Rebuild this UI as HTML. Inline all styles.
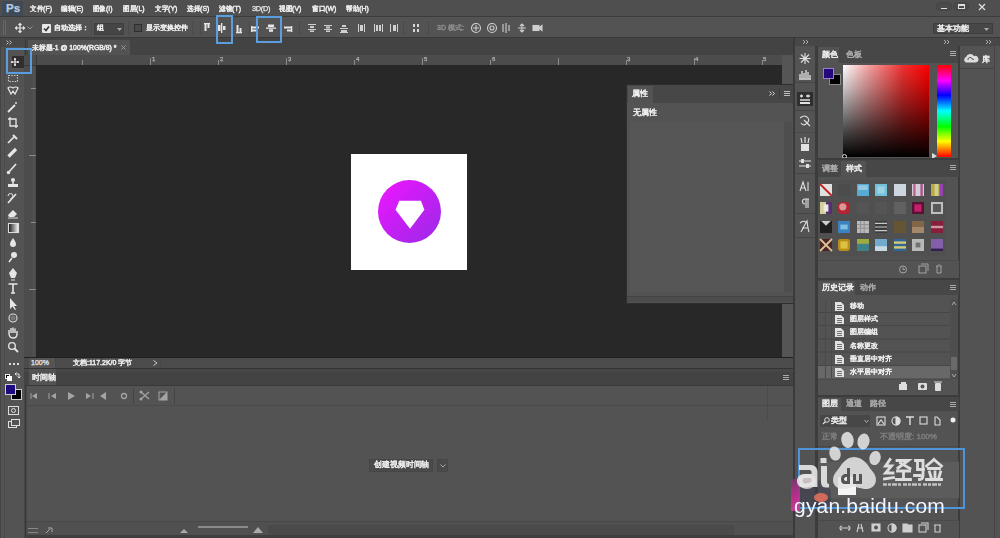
<!DOCTYPE html>
<html><head><meta charset="utf-8">
<style>
*{margin:0;padding:0;box-sizing:border-box}
html,body{width:1000px;height:538px;overflow:hidden;background:#535353;font-family:"Liberation Sans",sans-serif;color:#d0d0d0;font-size:8px}
#w{position:absolute;left:0;top:0;width:1000px;height:538px;overflow:hidden;filter:blur(0.5px)}
.a{position:absolute}
.t{position:absolute;white-space:nowrap;font-size:8px;line-height:10px;color:#ececec;-webkit-text-stroke:0.25px currentColor}
.d{color:#a9a9a9}
svg.i{position:absolute;overflow:visible}
</style></head><body><div id="w">
<!-- ===== MENU BAR ===== -->
<div class="a" style="left:0;top:0;width:1000px;height:17px;background:#4f4f4f"></div>
<div class="a" style="left:0;top:16px;width:1000px;height:1px;background:#3c3c3c"></div>
<div class="a" style="left:2px;top:1px;width:21px;height:15px;background:#404a55"></div><div class="t" style="left:6px;top:2px;font-size:11.5px;line-height:13px;color:#b4cce4;font-weight:bold;letter-spacing:0px">Ps</div>
<svg class="i" style="left:30.00px;top:4.00px" width="25" height="14"><text x="0" y="7.00" font-size="7.40" fill="rgb(236, 236, 236)" stroke="rgb(236, 236, 236)" stroke-width="0.5" textLength="21.94" lengthAdjust="spacingAndGlyphs">文件(F)</text></svg>
<svg class="i" style="left:61.00px;top:4.00px" width="26" height="14"><text x="0" y="7.00" font-size="7.40" fill="rgb(236, 236, 236)" stroke="rgb(236, 236, 236)" stroke-width="0.5" textLength="22.36" lengthAdjust="spacingAndGlyphs">编辑(E)</text></svg>
<svg class="i" style="left:93.00px;top:4.00px" width="23" height="14"><text x="0" y="7.00" font-size="7.40" fill="rgb(236, 236, 236)" stroke="rgb(236, 236, 236)" stroke-width="0.5" textLength="19.48" lengthAdjust="spacingAndGlyphs">图像(I)</text></svg>
<svg class="i" style="left:123.00px;top:4.00px" width="25" height="14"><text x="0" y="7.00" font-size="7.40" fill="rgb(236, 236, 236)" stroke="rgb(236, 236, 236)" stroke-width="0.5" textLength="21.55" lengthAdjust="spacingAndGlyphs">图层(L)</text></svg>
<svg class="i" style="left:155.00px;top:4.00px" width="26" height="14"><text x="0" y="7.00" font-size="7.40" fill="rgb(236, 236, 236)" stroke="rgb(236, 236, 236)" stroke-width="0.5" textLength="22.36" lengthAdjust="spacingAndGlyphs">文字(Y)</text></svg>
<svg class="i" style="left:187.00px;top:4.00px" width="26" height="14"><text x="0" y="7.00" font-size="7.40" fill="rgb(236, 236, 236)" stroke="rgb(236, 236, 236)" stroke-width="0.5" textLength="22.36" lengthAdjust="spacingAndGlyphs">选择(S)</text></svg>
<svg class="i" style="left:219.00px;top:4.00px" width="25" height="14"><text x="0" y="7.00" font-size="7.40" fill="rgb(236, 236, 236)" stroke="rgb(236, 236, 236)" stroke-width="0.5" textLength="21.94" lengthAdjust="spacingAndGlyphs">滤镜(T)</text></svg>
<div class="t" style="left:252px;top:4px;font-size:7.4px;letter-spacing:-0.3px">3D(D)</div>
<svg class="i" style="left:279.00px;top:4.00px" width="26" height="14"><text x="0" y="7.00" font-size="7.40" fill="rgb(236, 236, 236)" stroke="rgb(236, 236, 236)" stroke-width="0.5" textLength="22.36" lengthAdjust="spacingAndGlyphs">视图(V)</text></svg>
<svg class="i" style="left:312.00px;top:4.00px" width="28" height="14"><text x="0" y="7.00" font-size="7.40" fill="rgb(236, 236, 236)" stroke="rgb(236, 236, 236)" stroke-width="0.5" textLength="24.41" lengthAdjust="spacingAndGlyphs">窗口(W)</text></svg>
<svg class="i" style="left:346.00px;top:4.00px" width="26" height="14"><text x="0" y="7.00" font-size="7.40" fill="rgb(236, 236, 236)" stroke="rgb(236, 236, 236)" stroke-width="0.5" textLength="22.77" lengthAdjust="spacingAndGlyphs">帮助(H)</text></svg>
<!-- window controls -->
<div class="a" style="left:936px;top:2px;width:16px;height:9px;border:1px solid #454545;border-radius:4px;background:#4a4a4a"></div>
<div class="a" style="left:941px;top:8px;width:6px;height:1px;background:#ddd"></div>
<div class="a" style="left:953px;top:2px;width:16px;height:9px;border:1px solid #454545;border-radius:4px;background:#4a4a4a"></div>
<div class="a" style="left:958px;top:4px;width:7px;height:5px;border:1px solid #ddd;border-top-width:2px"></div>
<svg class="i" style="left:978px;top:3px" width="8" height="8"><path d="M1 1L7 7M7 1L1 7" stroke="#ddd" stroke-width="1.3"/></svg>
<!-- ===== OPTIONS BAR ===== -->
<div class="a" style="left:0;top:17px;width:1000px;height:21px;background:#535353;border-bottom:1px solid #3a3a3a"></div>
<div class="a" style="left:3px;top:20px;width:3px;height:15px;border-left:1px solid #666;border-right:1px solid #666"></div>
<svg class="i" style="left:15px;top:23px" width="10" height="10"><path d="M5 0.5V9.5M0.5 5H9.5M3.5 2L5 0.5L6.5 2M3.5 8L5 9.5L6.5 8M2 3.5L0.5 5L2 6.5M8 3.5L9.5 5L8 6.5" stroke="#e6e6e6" stroke-width="1.2" fill="none"/></svg>
<svg class="i" style="left:27px;top:26px" width="6" height="4"><path d="M0.5 0.5L3 3L5.5 0.5" stroke="#999" fill="none"/></svg>
<div class="a" style="left:42px;top:24px;width:9px;height:9px;background:#e8e8e8;border-radius:1px"></div>
<svg class="i" style="left:43px;top:25px" width="7" height="7"><path d="M1 3.5L3 5.5L6 1.5" stroke="#333" stroke-width="1.5" fill="none"/></svg>
<svg class="i" style="left:54.00px;top:23.00px" width="39" height="14"><text x="0" y="7.00" font-size="7.00" fill="rgb(236, 236, 236)" stroke="rgb(236, 236, 236)" stroke-width="0.5" textLength="35.00" lengthAdjust="spacingAndGlyphs">自动选择：</text></svg>
<div class="a" style="left:91px;top:21px;width:1px;height:14px;background:#4a4a4a"></div>
<div class="a" style="left:94px;top:23px;width:30px;height:12px;background:#454545;border:1px solid #3e3e3e"></div>
<svg class="i" style="left:97.00px;top:23.00px" width="11" height="14"><text x="0" y="7.00" font-size="7.00" fill="rgb(236, 236, 236)" stroke="rgb(236, 236, 236)" stroke-width="0.5" textLength="7.00" lengthAdjust="spacingAndGlyphs">组</text></svg>
<svg class="i" style="left:117px;top:28px" width="5" height="3"><path d="M0 0L2.5 3L5 0Z" fill="#aaa"/></svg>
<div class="a" style="left:128px;top:21px;width:1px;height:14px;background:#4a4a4a"></div>
<div class="a" style="left:134px;top:24px;width:8px;height:8px;border:1px solid #2e2e2e;background:#4a4a4a"></div>
<svg class="i" style="left:146.00px;top:23.00px" width="46" height="14"><text x="0" y="7.00" font-size="6.90" fill="rgb(236, 236, 236)" stroke="rgb(236, 236, 236)" stroke-width="0.5" textLength="42.00" lengthAdjust="spacingAndGlyphs">显示变换控件</text></svg>
<div class="a" style="left:192px;top:21px;width:1px;height:14px;background:#4a4a4a"></div>
<!-- align icons -->
<svg class="i" style="left:200px;top:22px" width="360" height="12" fill="#e6e6e6">
 <g><rect x="4" y="1" width="6" height="1.3"/><rect x="4.5" y="2" width="2" height="7"/><rect x="7.5" y="2" width="2" height="4"/></g>
 <g transform="translate(16,0)"><rect x="5" y="1" width="1.3" height="10"/><rect x="2" y="3" width="2.5" height="6"/><rect x="7" y="4" width="2.5" height="4"/></g>
 <g transform="translate(32,0)"><rect x="4" y="10" width="6" height="1.3"/><rect x="4.5" y="3" width="2" height="7"/><rect x="7.5" y="6" width="2" height="4"/></g>
 <g transform="translate(49,0)"><rect x="2" y="4" width="1.3" height="6"/><rect x="3" y="4.5" width="7" height="2"/><rect x="3" y="7.5" width="4" height="2"/></g>
 <g transform="translate(65,0)"><rect x="1" y="5.5" width="10" height="1.3"/><rect x="3" y="2.5" width="6" height="2.5"/><rect x="4" y="7.3" width="4" height="2.5"/></g>
 <g transform="translate(81,0)"><rect x="10" y="4" width="1.3" height="6"/><rect x="3" y="4.5" width="7" height="2"/><rect x="6" y="7.5" width="4" height="2"/></g>
 <g transform="translate(106,0)" opacity="0.85"><rect x="2" y="2" width="8" height="1"/><rect x="4" y="4" width="4" height="2"/><rect x="2" y="7" width="8" height="1"/><rect x="4" y="8.5" width="4" height="1.5"/></g>
 <g transform="translate(122,0)" opacity="0.85"><rect x="2" y="3" width="8" height="1"/><rect x="4" y="4.5" width="4" height="2"/><rect x="2" y="7" width="8" height="1"/><rect x="4" y="8.5" width="4" height="1.5"/></g>
 <g transform="translate(138,0)" opacity="0.85"><rect x="4" y="3" width="4" height="2"/><rect x="2" y="6" width="8" height="1"/><rect x="3" y="8" width="6" height="2"/><rect x="2" y="10" width="8" height="1"/></g>
 <g transform="translate(156,0)" opacity="0.85"><rect x="2" y="2" width="1" height="8"/><rect x="4" y="3" width="3" height="6"/><rect x="8" y="2" width="1" height="8"/></g>
 <g transform="translate(172,0)" opacity="0.85"><rect x="2" y="2" width="1" height="8"/><rect x="4" y="3" width="2" height="6"/><rect x="7" y="3" width="2" height="6"/><rect x="10" y="2" width="1" height="8"/></g>
 <g transform="translate(188,0)" opacity="0.85"><rect x="2" y="2" width="1" height="8"/><rect x="5" y="3" width="3" height="6"/><rect x="9" y="2" width="1" height="8"/></g>
 <g transform="translate(210,0)" opacity="0.9"><rect x="3" y="2" width="2" height="3"/><rect x="7" y="2" width="2" height="3"/><rect x="3" y="7" width="2" height="3"/><rect x="7" y="7" width="2" height="3"/></g>
</svg>
<div class="a" style="left:200px;top:21px;width:1px;height:14px;background:#4a4a4a"></div>
<div class="a" style="left:249px;top:21px;width:1px;height:14px;background:#4a4a4a"></div>
<div class="a" style="left:299px;top:21px;width:1px;height:14px;background:#4a4a4a"></div>
<div class="a" style="left:403px;top:21px;width:1px;height:14px;background:#4a4a4a"></div>
<div class="a" style="left:428px;top:21px;width:1px;height:14px;background:#4a4a4a"></div>
<svg class="i" style="left:437.00px;top:23.00px" width="30" height="14"><text x="0" y="7.00" font-size="7.00" fill="rgb(138, 138, 138)" stroke="rgb(138, 138, 138)" stroke-width="0.5" textLength="26.84" lengthAdjust="spacingAndGlyphs">3D 模式:</text></svg>
<svg class="i" style="left:470px;top:22px" width="75" height="12" fill="none" stroke="#cfcfcf" stroke-width="1.1">
 <circle cx="6" cy="6" r="4.5"/><path d="M3 6H9M6 3V9"/>
 <circle cx="22" cy="6" r="4.5"/><circle cx="22" cy="6" r="2"/>
 <path d="M33 2V10M36 1V11M39 3V9"/>
 <path d="M48 6H56M52 2V10M50 4L52 2L54 4M50 8L52 10L54 8"/>
 <rect x="63" y="3.5" width="6" height="5" fill="#cfcfcf"/><path d="M69 6L72 3.5V8.5Z" fill="#cfcfcf"/>
</svg>
<!-- blue highlight boxes on options -->
<div class="a" style="left:216px;top:15px;width:17px;height:29px;border:2px solid #5a9ee0;z-index:6"></div>
<div class="a" style="left:256px;top:16px;width:26px;height:27px;border:2px solid #5a9ee0;z-index:6"></div>
<!-- workspace dropdown -->
<div class="a" style="left:933px;top:23px;width:60px;height:11px;background:#474747;border:1px solid #3e3e3e"></div>
<svg class="i" style="left:937.00px;top:24.00px" width="36" height="14"><text x="0" y="7.00" font-size="8.00" fill="rgb(236, 236, 236)" stroke="rgb(236, 236, 236)" stroke-width="0.5" textLength="32.00" lengthAdjust="spacingAndGlyphs">基本功能</text></svg>
<svg class="i" style="left:984px;top:28px" width="5" height="3"><path d="M0 0L2.5 3L5 0Z" fill="#aaa"/></svg>

<!-- ===== TOOLS COLUMN ===== -->
<div class="a" style="left:0;top:38px;width:25px;height:500px;background:#535353"></div>
<div class="a" style="left:0;top:38px;width:25px;height:9px;background:#484848"></div>
<svg class="i" style="left:6px;top:40px" width="6" height="5"><path d="M0.5 0.5L2.5 2.5L0.5 4.5M3.5 0.5L5.5 2.5L3.5 4.5" stroke="#bbb" fill="none"/></svg>
<div class="a" style="left:0;top:38px;width:1px;height:500px;background:#444"></div><div class="a" style="left:4px;top:47px;width:1px;height:491px;background:#4a4a4a"></div><div class="a" style="left:24px;top:38px;width:3px;height:500px;background:#474747"></div><div class="a" style="left:25px;top:38px;width:1px;height:500px;background:#383838"></div>
<div class="a" style="left:6px;top:48px;width:26px;height:26px;border:2px solid #5a9ee0;z-index:5"></div>
<div class="a" style="left:12px;top:56px;width:12px;height:12px;background:#332e2e"></div>
<svg class="i" style="left:0;top:0" width="26" height="440" fill="none" stroke="#e6e6e6" stroke-width="1.1">
 <!-- move -->
 <path d="M15 59V65M12 62H18" stroke-width="1.2"/><circle cx="15" cy="59" r="1.1" fill="#eee" stroke="none"/><circle cx="15" cy="65" r="1.1" fill="#eee" stroke="none"/><circle cx="12" cy="62" r="1.1" fill="#eee" stroke="none"/><circle cx="18" cy="62" r="1.1" fill="#eee" stroke="none"/>
 <!-- marquee -->
 <rect x="8.5" y="75.5" width="9" height="6" stroke-dasharray="1.5 1.2" stroke="#ccc"/>
 <!-- lasso -->
 <path d="M8 88Q10 86 13 88Q16 86 18 88L15 94L13 91L11 94Z" stroke-width="1.2"/>
 <!-- wand -->
 <path d="M8 112L15 105" stroke-width="1.8"/><path d="M16 102V104M17 103H15" stroke-width="0.9"/>
 <!-- crop -->
 <path d="M10 117V126H18M8 119H16V128" stroke-width="1.3"/>
 <!-- eyedropper -->
 <path d="M8 143L14 137" stroke-width="1.7"/><path d="M13 135L17 139" stroke-width="2"/>
 <!-- healing -->
 <path d="M8.5 156.5L16 149" stroke-width="3.2"/>
 <!-- brush -->
 <path d="M8 173L16 164" stroke-width="1.7"/><circle cx="8.5" cy="172.5" r="1.2" fill="#e6e6e6"/>
 <!-- stamp -->
 <circle cx="13" cy="180" r="2" fill="#e6e6e6" stroke="none"/><path d="M13 182V184" stroke-width="1.5"/><rect x="8" y="184" width="10" height="3" fill="#e6e6e6" stroke="none"/>
 <!-- history brush -->
 <path d="M8 203L16 194" stroke-width="1.7"/><path d="M8 196A2.5 2.5 0 1 1 10.5 198.5" stroke-width="1"/>
 <!-- eraser -->
 <path d="M8 215L13 210L17 214L14 217H9Z" fill="#e6e6e6" stroke="none"/><path d="M8 218H18" stroke-width="0.9"/>
 <!-- gradient -->
 <rect x="8.5" y="223.5" width="10" height="9" stroke="#ddd"/><rect x="9" y="224" width="9" height="8" fill="url(#gr)" stroke="none"/>
 <!-- blur drop -->
 <path d="M13 238Q16 242 16 244A3 3 0 0 1 10 244Q10 242 13 238Z" fill="#e6e6e6" stroke="none"/>
 <!-- dodge -->
 <circle cx="14" cy="255" r="3" fill="#e6e6e6" stroke="none"/><path d="M12 258L9 262" stroke-width="1.5"/>
 <!-- pen -->
 <path d="M13 268L17 273L15 278H11L9 273Z" fill="#e6e6e6" stroke="none"/><path d="M11 280H15" stroke-width="1"/>
 <!-- type -->
 <path d="M8.5 284H17.5M13 284V293M11 293H15" stroke-width="1.6"/>
 <!-- path select -->
 <path d="M10 298V309L12.5 306.5L15 310L16 309.5L14 306H17Z" fill="#e6e6e6" stroke="none"/>
 <!-- shape -->
 <circle cx="13" cy="318" r="4" stroke="#ddd"/><circle cx="13" cy="318" r="2.5" fill="#777" stroke="none"/>
 <!-- hand -->
 <path d="M9 333V330M11 333V328M13 333V327.5M15 333V328.5M17 334V331M9 333Q9 338 13 338Q17 338 17 334" stroke-width="1.4"/>
 <!-- zoom -->
 <circle cx="12" cy="346" r="3.3" stroke-width="1.3"/><path d="M14.5 348.5L18 352" stroke-width="1.8"/>
</svg>
<svg width="0" height="0" style="position:absolute"><defs><linearGradient id="gr"><stop offset="0" stop-color="#222"/><stop offset="1" stop-color="#eee"/></linearGradient></defs></svg>
<div class="a" style="left:9px;top:363px;width:2px;height:2px;background:#ddd;box-shadow:4px 0 #ddd,8px 0 #ddd"></div>
<div class="a" style="left:5px;top:374px;width:5px;height:5px;background:#000;border:1px solid #eee"></div>
<div class="a" style="left:7px;top:376px;width:5px;height:5px;background:#fff"></div>
<svg class="i" style="left:14px;top:372px" width="7" height="7"><path d="M1 2H5V6M3.5 4.5L5 6L6.5 4.5M2.5 0.5L1 2L2.5 3.5" stroke="#ddd" fill="none"/></svg>
<div class="a" style="left:11px;top:389px;width:11px;height:11px;background:#000;border:1px solid #cfcfcf"></div>
<div class="a" style="left:5px;top:384px;width:11px;height:11px;background:#1f0a80;border:1px solid #cfcfcf"></div>
<div class="a" style="left:8px;top:406px;width:11px;height:9px;border:1px solid #ddd"></div>
<div class="a" style="left:11px;top:408px;width:5px;height:5px;border:1px solid #ddd;border-radius:50%"></div>
<div class="a" style="left:8px;top:421px;width:9px;height:7px;border:1px solid #ddd"></div>
<div class="a" style="left:11px;top:419px;width:9px;height:7px;border:1px solid #ddd;background:#535353"></div>

<!-- ===== DOCUMENT AREA ===== -->
<div class="a" style="left:27px;top:38px;width:766px;height:17px;background:#434343"></div>
<div class="a" style="left:28px;top:40px;width:102px;height:15px;background:#535353;border-radius:2px 2px 0 0"></div>
<svg class="i" style="left:32.00px;top:43.00px" width="88" height="14"><text x="0" y="7.00" font-size="7.00" fill="rgb(236, 236, 236)" stroke="rgb(236, 236, 236)" stroke-width="0.5" textLength="84.38" lengthAdjust="spacingAndGlyphs">未标题-1 @ 100%(RGB/8) *</text></svg>
<svg class="i" style="left:121px;top:45px" width="5" height="5"><path d="M0.5 0.5L4.5 4.5M4.5 0.5L0.5 4.5" stroke="#999"/></svg>
<!-- rulers -->
<div class="a" style="left:27px;top:55px;width:755px;height:11px;background:#4c4c4c;border-bottom:1px solid #1e1e1e"></div>
<div class="a" style="left:24px;top:55px;width:13px;height:303px;background:#4c4c4c;border-right:1px solid #222"></div><div class="a" style="left:33px;top:66px;width:1px;height:292px;background:#555"></div>
<div class="a" style="left:24px;top:55px;width:13px;height:11px;background:#4c4c4c;border-right:1px solid #3a3a3a;border-bottom:1px solid #3a3a3a"></div>
<svg class="i" style="left:0;top:0" width="800" height="360" stroke="#8c8c8c" stroke-width="1">
 <path d="M82.5 60V65M150.5 58V65M218.5 60V65M286.5 58V65M354.5 60V65M422.5 58V65M490.5 60V65M558.5 58V65M626.5 60V65M694.5 58V65M762.5 60V65"/>
 <path d="M31 88.5H36M29 155.5H36M31 222.5H36M29 289.5H36"/>
</svg>
<div class="t" style="left:152px;top:56px;font-size:6px;line-height:7px;color:#b0b0b0">1</div>
<div class="t" style="left:220px;top:56px;font-size:6px;line-height:7px;color:#b0b0b0">2</div>
<div class="t" style="left:288px;top:56px;font-size:6px;line-height:7px;color:#b0b0b0">3</div>
<div class="t" style="left:356px;top:56px;font-size:6px;line-height:7px;color:#b0b0b0">4</div>
<div class="t" style="left:424px;top:56px;font-size:6px;line-height:7px;color:#b0b0b0">5</div>
<div class="t" style="left:492px;top:56px;font-size:6px;line-height:7px;color:#b0b0b0">6</div>
<div class="t" style="left:627px;top:56px;font-size:6px;line-height:7px;color:#b0b0b0">3</div>
<div class="t" style="left:695px;top:56px;font-size:6px;line-height:7px;color:#b0b0b0">4</div>
<div class="t" style="left:763px;top:56px;font-size:6px;line-height:7px;color:#b0b0b0">5</div>
<!-- canvas -->
<div class="a" style="left:36px;top:65px;width:746px;height:293px;background:#282828"></div>
<!-- right strip of doc window -->
<div class="a" style="left:782px;top:55px;width:11px;height:303px;background:#555"></div>
<!-- document image -->
<div class="a" style="left:351px;top:154px;width:116px;height:116px;background:#fff"></div>
<div class="a" style="left:378px;top:180px;width:63px;height:63px;border-radius:50%;background:linear-gradient(135deg,#f016ff 0%,#c81ef5 45%,#9a2ae6 100%)"></div>
<svg class="i" style="left:0;top:0" width="1000" height="538"><polygon points="399.3,200.8 420.9,200.8 424.4,209.8 410,228.7 395.5,209.8" fill="#fff"/></svg>
<!-- status bar -->
<div class="a" style="left:24px;top:357px;width:769px;height:1px;background:#202020"></div><div class="a" style="left:24px;top:358px;width:769px;height:10px;background:#4c4c4c"></div><div class="a" style="left:29px;top:358px;width:26px;height:10px;background:#555"></div>
<div class="a" style="left:55px;top:358px;width:1px;height:10px;background:#474747"></div>
<div class="t" style="left:31px;top:358px;font-size:7px">100%</div>
<svg class="i" style="left:73.00px;top:358.00px" width="63" height="14"><text x="0" y="7.00" font-size="7.00" fill="rgb(236, 236, 236)" stroke="rgb(236, 236, 236)" stroke-width="0.5" textLength="59.41" lengthAdjust="spacingAndGlyphs">文档:117.2K/0 字节</text></svg>
<svg class="i" style="left:153px;top:360px" width="5" height="6"><path d="M0.5 0.5L4 3L0.5 5.5" stroke="#ccc" fill="none"/></svg>
<div class="a" style="left:160px;top:358px;width:1px;height:10px;background:#474747"></div>
<!-- properties floating panel -->
<div class="a" style="left:626px;top:84px;width:168px;height:220px;background:#2e2e2e"></div>
<div class="a" style="left:627px;top:85px;width:166px;height:218px;background:#535353"></div>
<div class="a" style="left:627px;top:85px;width:166px;height:18px;background:#474747"></div>
<div class="a" style="left:628px;top:86px;width:25px;height:17px;background:#535353"></div>
<svg class="i" style="left:632.00px;top:89.00px" width="20" height="14"><text x="0" y="7.00" font-size="8.00" fill="rgb(236, 236, 236)" stroke="rgb(236, 236, 236)" stroke-width="0.5" textLength="16.00" lengthAdjust="spacingAndGlyphs">属性</text></svg>
<svg class="i" style="left:769px;top:91px" width="7" height="5"><path d="M0.5 0.5L2.5 2.5L0.5 4.5M3.5 0.5L5.5 2.5L3.5 4.5" stroke="#ddd" fill="none"/></svg>
<div class="a" style="left:779px;top:89px;width:1px;height:10px;background:#3a3a3a"></div>
<div class="a" style="left:784px;top:91px;width:6px;height:5px;border-top:1px solid #bbb;border-bottom:1px solid #bbb"></div>
<div class="a" style="left:784px;top:93px;width:6px;height:1px;background:#bbb"></div>
<svg class="i" style="left:633.00px;top:108.00px" width="28" height="14"><text x="0" y="7.00" font-size="8.00" fill="rgb(236, 236, 236)" stroke="rgb(236, 236, 236)" stroke-width="0.5" textLength="24.00" lengthAdjust="spacingAndGlyphs">无属性</text></svg>
<div class="a" style="left:630px;top:122px;width:154px;height:170px;background:#565656"></div>
<div class="a" style="left:784px;top:122px;width:8px;height:170px;background:#4e4e4e"></div>
<div class="a" style="left:627px;top:296px;width:166px;height:6px;background:#4c4c4c;border-top:1px solid #444"></div>
<!-- ===== TIMELINE ===== -->
<div class="a" style="left:24px;top:368px;width:769px;height:1px;background:#333"></div>
<div class="a" style="left:24px;top:369px;width:769px;height:17px;background:#434343;border-top:3px solid #474747;border-bottom:1px solid #383838"></div>
<div class="a" style="left:29px;top:369px;width:27px;height:16px;background:#535353"></div>
<svg class="i" style="left:32.00px;top:373.00px" width="28" height="14"><text x="0" y="7.00" font-size="8.00" fill="rgb(236, 236, 236)" stroke="rgb(236, 236, 236)" stroke-width="0.5" textLength="24.00" lengthAdjust="spacingAndGlyphs">时间轴</text></svg>
<div class="a" style="left:27px;top:386px;width:766px;height:152px;background:#535353"></div><div class="a" style="left:783px;top:375px;width:6px;height:5px;border-top:1px solid #aaa;border-bottom:1px solid #aaa"></div><div class="a" style="left:783px;top:377px;width:6px;height:1px;background:#aaa"></div>
<svg class="i" style="left:0;top:0" width="800" height="538" fill="#a4a4a4">
 <path d="M31 393V399" stroke="#a4a4a4"/><path d="M37 393L32 396L37 399Z"/>
 <path d="M49 393V399" stroke="#a4a4a4"/><path d="M56 393L51 396L56 399Z"/>
 <path d="M68 392L75 396L68 400Z"/>
 <path d="M93 393V399" stroke="#a4a4a4"/><path d="M86 393L91 396L86 399Z"/>
 <path d="M106 392L100 396L106 400Z"/>
 <circle cx="124" cy="396" r="2.5" fill="none" stroke="#a4a4a4" stroke-width="1.3"/>
 <path d="M133.5 388V404" stroke="#444"/>
 <path d="M141 392L149 399M141 399L149 392" stroke="#a4a4a4" stroke-width="1.2"/><circle cx="141" cy="392" r="1.5"/><circle cx="141" cy="399" r="1.5"/>
 <rect x="159" y="392" width="8" height="8" fill="none" stroke="#a4a4a4"/><path d="M159 400L167 392V400Z"/>
 <path d="M174.5 388V404" stroke="#444"/>
</svg>
<div class="a" style="left:27px;top:405px;width:766px;height:1px;background:#4a4a4a"></div><div class="a" style="left:767px;top:386px;width:1px;height:34px;background:#4b4b4b"></div>
<div class="a" style="left:369px;top:459px;width:64px;height:13px;background:#4a4a4a;border:1px solid #464646"></div>
<svg class="i" style="left:374.00px;top:460.00px" width="59" height="14"><text x="0" y="7.00" font-size="7.60" fill="rgb(236, 236, 236)" stroke="rgb(236, 236, 236)" stroke-width="0.5" textLength="55.31" lengthAdjust="spacingAndGlyphs">创建视频时间轴</text></svg>
<div class="a" style="left:437px;top:459px;width:11px;height:13px;background:#4a4a4a;border:1px solid #464646"></div>
<svg class="i" style="left:439.5px;top:464px" width="6" height="4"><path d="M0.5 0.5L3 3L5.5 0.5" stroke="#aaa" fill="none"/></svg>
<div class="a" style="left:27px;top:521px;width:766px;height:14px;background:#505050;border-top:1px solid #484848"></div>
<div class="a" style="left:28px;top:528px;width:10px;height:5px;border-top:1px solid #888;border-bottom:1px solid #888"></div>
<svg class="i" style="left:45px;top:526px" width="10" height="8"><path d="M1 7L5 3M3 2H7V6" stroke="#aaa" fill="none"/></svg>
<svg class="i" style="left:180px;top:528px" width="8" height="5"><path d="M0 5L4 1L8 5Z" fill="#aaa"/></svg>
<div class="a" style="left:198px;top:526px;width:50px;height:2px;background:#8a8a8a"></div>
<svg class="i" style="left:253px;top:526px" width="10" height="7"><path d="M0 7L5 1L10 7Z" fill="#aaa"/></svg>
<div class="a" style="left:268px;top:525px;width:466px;height:10px;background:#4a4a4a"></div>
<!-- doc bottom/right frame -->
<div class="a" style="left:793px;top:38px;width:2px;height:500px;background:#3a3a3a"></div>
<div class="a" style="left:27px;top:535px;width:766px;height:3px;background:#3e3e3e"></div>

<!-- ===== RIGHT DOCK ===== -->
<div class="a" style="left:795px;top:38px;width:205px;height:500px;background:#535353"></div>
<div class="a" style="left:795px;top:38px;width:205px;height:8px;background:#474747"></div>
<svg class="i" style="left:0;top:0" width="1000" height="50"><path d="M803 40L805 42L803 44M806 40L808 42L806 44M944 40L946 42L944 44M947 40L949 42L947 44M986 40L988 42L986 44M989 40L991 42L989 44" stroke="#bbb" fill="none" stroke-width="0.9"/></svg>
<!-- icon column -->
<div class="a" style="left:815px;top:46px;width:3px;height:492px;background:#3c3c3c"></div>
<div class="a" style="left:795px;top:82px;width:20px;height:1px;background:#454545"></div>
<div class="a" style="left:795px;top:110px;width:20px;height:1px;background:#454545"></div>
<div class="a" style="left:795px;top:173px;width:20px;height:1px;background:#454545"></div><div class="a" style="left:795px;top:132px;width:20px;height:1px;background:#4a4a4a"></div>
<div class="a" style="left:795px;top:213px;width:20px;height:1px;background:#454545"></div>
<div class="a" style="left:795px;top:237px;width:20px;height:1px;background:#454545"></div>
<div class="a" style="left:797px;top:92px;width:16px;height:14px;background:#2f2f2f"></div>
<svg class="i" style="left:0;top:0" width="1000" height="240" fill="none" stroke="#e0e0e0" stroke-width="1.1">
 <path d="M805 53V64M799.5 58.5H810.5M801 54.5L809 62.5M809 54.5L801 62.5"/>
 <path d="M799 79H811M800 78V74M802 78V71M804 78V73M806 78V70M808 78V72M810 78V75" stroke-width="1.3"/>
 <path d="M800 96H803M806 96H810M801.5 94.5V97.5M808 94.5V97.5M800 100H810" stroke-width="1.3"/><rect x="800" y="102" width="10" height="2" fill="#e0e0e0" stroke="none"/>
 <path d="M800 118Q805 114 808 118Q810 121 806 124Q803 126 801 123M804 120L810 126" />
 <path d="M801 144H809V151H801Z" fill="#e0e0e0" stroke="none"/><path d="M802 143L801 138M805 143V137M808 143L809 138" stroke-width="1.2"/>
 <path d="M799 161H811M799 166H811" stroke-width="1.1"/><rect x="801" y="159" width="3" height="4" fill="#e0e0e0" stroke="none"/><rect x="806" y="164" width="3" height="4" fill="#e0e0e0" stroke="none"/>
 <path d="M800 191L803 182L806 191M801 188H805M808 182V191"/>
 <path d="M806 199V208M808 199V208M805 199H809M805 199A2.5 2.5 0 0 0 805 204"/>
 <path d="M801 232Q804 226 807 221Q808 229 809 232M802 228H808M800 223Q803 220 806 222" />
</svg>
<!-- color panel -->
<div class="a" style="left:818px;top:46px;width:141px;height:17px;background:#474747"></div>
<div class="a" style="left:818px;top:47px;width:21px;height:16px;background:#535353"></div>
<svg class="i" style="left:822.00px;top:50.00px" width="20" height="14"><text x="0" y="7.00" font-size="8.00" fill="rgb(236, 236, 236)" stroke="rgb(236, 236, 236)" stroke-width="0.5" textLength="16.00" lengthAdjust="spacingAndGlyphs">颜色</text></svg>
<svg class="i" style="left:846.00px;top:50.00px" width="20" height="14"><text x="0" y="7.00" font-size="8.00" fill="rgb(169, 169, 169)" stroke="rgb(169, 169, 169)" stroke-width="0.5" textLength="16.00" lengthAdjust="spacingAndGlyphs">色板</text></svg>
<div class="a" style="left:950px;top:51px;width:6px;height:5px;border-top:1px solid #aaa;border-bottom:1px solid #aaa"></div>
<div class="a" style="left:950px;top:53px;width:6px;height:1px;background:#aaa"></div>
<div class="a" style="left:843px;top:65px;width:86px;height:92px;background:linear-gradient(to bottom,rgba(0,0,0,0) 0%,rgba(0,0,0,0.22) 25%,rgba(0,0,0,0.48) 50%,rgba(0,0,0,0.75) 75%,#000 100%),linear-gradient(to right,#fff 0%,#f4a0a0 30%,#f03030 70%,#f00 100%)"></div>
<div class="a" style="left:842px;top:154px;width:5px;height:5px;border:1px solid #ddd;border-radius:50%"></div>
<div class="a" style="left:937px;top:65px;width:14px;height:92px;background:linear-gradient(to bottom,#f00 0%,#f0f 17%,#00f 33%,#0ff 50%,#0f0 67%,#ff0 83%,#f00 100%)"></div>
<svg class="i" style="left:932px;top:153px" width="5" height="6"><path d="M0 0L5 3L0 6Z" fill="#ddd"/></svg>
<div class="a" style="left:829px;top:74px;width:12px;height:11px;background:#000;border:1px solid #888"></div>
<div class="a" style="left:823px;top:68px;width:11px;height:11px;background:#25087e;border:1px solid #a07ad8"></div>
<!-- library column -->
<div class="a" style="left:958px;top:46px;width:2px;height:492px;background:#3c3c3c"></div>
<div class="a" style="left:994px;top:46px;width:1px;height:492px;background:#454545"></div>
<div class="a" style="left:960px;top:68px;width:34px;height:1px;background:#454545"></div>
<svg class="i" style="left:963px;top:53px" width="16" height="11"><path d="M3 9.5A3 3 0 0 1 3 4A4.5 4.5 0 0 1 11 3A3.2 3.2 0 0 1 13 9.5Z" fill="#ddd"/><path d="M5 7A2 2 0 0 1 9 6A2 2 0 0 1 11 7" stroke="#535353" fill="none"/></svg>
<svg class="i" style="left:982.00px;top:55.00px" width="12" height="14"><text x="0" y="7.00" font-size="8.00" fill="rgb(236, 236, 236)" stroke="rgb(236, 236, 236)" stroke-width="0.5" textLength="8.00" lengthAdjust="spacingAndGlyphs">库</text></svg>
<!-- styles panel -->
<div class="a" style="left:818px;top:158px;width:141px;height:2px;background:#3c3c3c"></div>
<div class="a" style="left:818px;top:160px;width:141px;height:17px;background:#474747"></div>
<div class="a" style="left:841px;top:161px;width:25px;height:16px;background:#535353"></div>
<svg class="i" style="left:822.00px;top:164.00px" width="20" height="14"><text x="0" y="7.00" font-size="8.00" fill="rgb(169, 169, 169)" stroke="rgb(169, 169, 169)" stroke-width="0.5" textLength="16.00" lengthAdjust="spacingAndGlyphs">调整</text></svg>
<svg class="i" style="left:846.00px;top:164.00px" width="20" height="14"><text x="0" y="7.00" font-size="8.00" fill="rgb(236, 236, 236)" stroke="rgb(236, 236, 236)" stroke-width="0.5" textLength="16.00" lengthAdjust="spacingAndGlyphs">样式</text></svg>
<div class="a" style="left:950px;top:165px;width:6px;height:5px;border-top:1px solid #aaa;border-bottom:1px solid #aaa"></div>
<div class="a" style="left:950px;top:167px;width:6px;height:1px;background:#aaa"></div>
<div class="a" style="left:818px;top:180px;width:128px;height:76px;background:#505050"></div>
<svg class="i" style="left:0;top:0" width="1000" height="260" opacity="0.88">
 <g transform="translate(820,184) scale(1.2)"><rect width="10" height="10" fill="#f4f4f4"/><path d="M0 0L10 10" stroke="#d02020" stroke-width="1.5"/></g>
 <g transform="translate(838,184) scale(1.2)"><rect width="10" height="10" fill="#4c4c4c"/></g>
 <g transform="translate(857,184) scale(1.2)"><rect width="10" height="10" fill="#58b8e4"/><rect x="1" y="1" width="8" height="4" fill="#9ad8f4"/></g>
 <g transform="translate(875,184) scale(1.2)"><rect width="10" height="10" fill="#78d0ee"/><rect x="2" y="2" width="6" height="6" fill="#a8e4f8"/></g>
 <g transform="translate(894,184) scale(1.2)"><rect width="10" height="10" fill="#dfe8f2"/></g>
 <g transform="translate(912,184) scale(1.2)"><rect width="10" height="10" fill="#e8dce8"/><rect x="1" width="2" height="10" fill="#c86aa0"/><rect x="7" width="2" height="10" fill="#b05a98"/></g>
 <g transform="translate(931,184) scale(1.2)"><rect width="10" height="10" fill="#c8b840"/><rect x="3" width="3" height="10" fill="#e0e0a0"/><rect x="7" width="3" height="10" fill="#a040c0"/></g>
 <g transform="translate(820,202) scale(1.2)"><rect width="10" height="10" fill="#5a2a7a"/><rect width="5" height="10" fill="#e8e0a0"/><rect x="3" y="2" width="4" height="6" fill="#fff"/></g>
 <g transform="translate(838,202) scale(1.2)"><rect width="10" height="10" rx="3" fill="#c02030"/><circle cx="4" cy="4" r="3" fill="#f0a0a0"/></g>
 <g transform="translate(857,202) scale(1.2)"><rect width="10" height="10" fill="#555"/></g>
 <g transform="translate(875,202) scale(1.2)"><rect width="10" height="10" fill="#565656"/></g>
 <g transform="translate(894,202) scale(1.2)"><rect width="10" height="10" fill="#646464"/></g>
 <g transform="translate(912,202) scale(1.2)"><rect width="10" height="10" fill="#5a0a30"/><rect x="2" y="2" width="6" height="6" fill="#d81870"/></g>
 <g transform="translate(931,202) scale(1.0)"><rect width="12" height="12" fill="#cfcfcf"/><rect x="2" y="2" width="8" height="8" fill="#5a5a5a"/></g>
 <g transform="translate(820,221) scale(1.2)"><rect width="10" height="10" fill="#1a1a1a"/><path d="M1 0L5 4L9 0Z" fill="#e0e0e0"/></g>
 <g transform="translate(838,221) scale(1.2)"><rect width="10" height="10" fill="#3a8ad0"/><rect x="2" y="3" width="6" height="4" fill="#8ad0f8"/></g>
 <g transform="translate(857,221) scale(1.2)"><rect width="10" height="10" fill="#c8c8c8"/><path d="M3 0V10M6 0V10M0 3H10M0 6H10" stroke="#999" stroke-width="0.8"/></g>
 <g transform="translate(875,221) scale(1.2)"><rect width="10" height="10" fill="#3a3a3a"/><path d="M0 2H10M0 5H10M0 8H10" stroke="#d8d8d8" stroke-width="1"/></g>
 <g transform="translate(894,221) scale(1.2)"><rect width="10" height="10" fill="#6a5630"/></g>
 <g transform="translate(912,221) scale(1.2)"><rect width="10" height="10" fill="#8a6a48"/><rect y="5" width="10" height="5" fill="#b09070"/></g>
 <g transform="translate(931,221) scale(1.2)"><rect width="10" height="10" fill="#901838"/><rect y="4" width="10" height="2" fill="#e0a0b0"/></g>
 <g transform="translate(820,239) scale(1.2)"><rect width="10" height="10" fill="#4a2020"/><path d="M0 0L10 10M10 0L0 10" stroke="#f0d0a0" stroke-width="1.5"/></g>
 <g transform="translate(838,239) scale(1.2)"><rect width="10" height="10" rx="2" fill="#c89810"/><rect x="2" y="2" width="6" height="6" fill="#f0d040"/></g>
 <g transform="translate(857,239) scale(1.2)"><rect width="10" height="10" fill="#3a8a90"/><rect y="0" width="10" height="4" fill="#a8b840"/></g>
 <g transform="translate(875,239) scale(1.2)"><rect width="10" height="10" fill="#78b8e0"/><rect y="6" width="10" height="4" fill="#d8ecf8"/></g>
 <g transform="translate(894,239) scale(1.2)"><rect width="10" height="10" fill="#2a6aa0"/><rect y="2" width="10" height="2" fill="#e8d880"/><rect y="6" width="10" height="2" fill="#e8d880"/></g>
 <g transform="translate(912,239) scale(1.2)"><rect width="10" height="10" fill="#c8c8c8"/><rect x="3" y="3" width="4" height="4" fill="#777"/></g>
 <g transform="translate(931,239) scale(1.2)"><rect width="10" height="10" fill="#8a60b8"/><rect y="8" width="10" height="2" fill="#301850"/></g>
</svg>
<div class="a" style="left:818px;top:260px;width:141px;height:18px;background:#535353;border-top:1px solid #4a4a4a"></div>
<svg class="i" style="left:0;top:0" width="1000" height="280" fill="none" stroke="#a4a4a4" stroke-width="1">
 <circle cx="903" cy="269.5" r="3.5"/><path d="M903 267.5V269.5H905"/>
 <rect x="919" y="266" width="7" height="7"/><path d="M921 264H928V271"/>
 <path d="M936 266H942M937 266V273H941V266M938.5 264.5H939.5"/>
</svg>
<!-- history panel -->
<div class="a" style="left:818px;top:278px;width:141px;height:2px;background:#3c3c3c"></div>
<div class="a" style="left:818px;top:280px;width:141px;height:15px;background:#474747"></div>
<div class="a" style="left:818px;top:281px;width:37px;height:14px;background:#535353"></div>
<svg class="i" style="left:822.00px;top:283.00px" width="36" height="14"><text x="0" y="7.00" font-size="8.00" fill="rgb(236, 236, 236)" stroke="rgb(236, 236, 236)" stroke-width="0.5" textLength="32.00" lengthAdjust="spacingAndGlyphs">历史记录</text></svg>
<svg class="i" style="left:860.00px;top:283.00px" width="20" height="14"><text x="0" y="7.00" font-size="8.00" fill="rgb(169, 169, 169)" stroke="rgb(169, 169, 169)" stroke-width="0.5" textLength="16.00" lengthAdjust="spacingAndGlyphs">动作</text></svg>
<div class="a" style="left:950px;top:285px;width:6px;height:5px;border-top:1px solid #aaa;border-bottom:1px solid #aaa"></div>
<div class="a" style="left:950px;top:287px;width:6px;height:1px;background:#aaa"></div>
<div class="a" style="left:818px;top:299px;width:132px;height:80px;background:#535353"></div>
<div class="a" style="left:818px;top:366px;width:132px;height:13px;background:#686868"></div>
<svg class="i" style="left:0;top:0" width="1000" height="400">
 <path d="M818 312.5H950M818 325.5H950M818 339H950M818 352H950M818 365.5H950M818 379H950" stroke="#474747"/>
 <path d="M825.5 301V378M831.5 301V378" stroke="#4a4a4a"/>
 <g fill="#e2e2e2"><path d="M835 302 H841 L844 305 V311 H835Z"/><path d="M835 315 H841 L844 318 V324 H835Z"/><path d="M835 328 H841 L844 331 V337 H835Z"/><path d="M835 341 H841 L844 344 V350 H835Z"/><path d="M835 355 H841 L844 358 V364 H835Z"/><path d="M835 368 H841 L844 371 V377 H835Z"/></g>
 <g stroke="#666" stroke-width="0.9"><path d="M837 305.5H842M837 307.5H842M837 309.5H842"/><path d="M837 318.5H842M837 320.5H842M837 322.5H842"/><path d="M837 331.5H842M837 333.5H842M837 335.5H842"/><path d="M837 344.5H842M837 346.5H842M837 348.5H842"/><path d="M837 358.5H842M837 360.5H842M837 362.5H842"/><path d="M837 371.5H842M837 373.5H842M837 375.5H842"/></g>
 <rect x="950" y="299" width="8" height="80" fill="#4e4e4e"/>
 <path d="M952 305L954 302L956 305" stroke="#aaa" fill="none"/>
 <rect x="951" y="357" width="6" height="13" fill="#6a6a6a"/>
 <path d="M952 374L954 377L956 374" stroke="#aaa" fill="none"/>
</svg>
<svg class="i" style="left:850.00px;top:301.00px" width="18" height="14"><text x="0" y="7.00" font-size="7.30" fill="rgb(236, 236, 236)" stroke="rgb(236, 236, 236)" stroke-width="0.5" textLength="14.00" lengthAdjust="spacingAndGlyphs">移动</text></svg>
<svg class="i" style="left:850.00px;top:314.00px" width="32" height="14"><text x="0" y="7.00" font-size="7.30" fill="rgb(236, 236, 236)" stroke="rgb(236, 236, 236)" stroke-width="0.5" textLength="28.00" lengthAdjust="spacingAndGlyphs">图层样式</text></svg>
<svg class="i" style="left:850.00px;top:327.00px" width="32" height="14"><text x="0" y="7.00" font-size="7.30" fill="rgb(236, 236, 236)" stroke="rgb(236, 236, 236)" stroke-width="0.5" textLength="28.00" lengthAdjust="spacingAndGlyphs">图层编组</text></svg>
<svg class="i" style="left:850.00px;top:341.00px" width="32" height="14"><text x="0" y="7.00" font-size="7.30" fill="rgb(236, 236, 236)" stroke="rgb(236, 236, 236)" stroke-width="0.5" textLength="28.00" lengthAdjust="spacingAndGlyphs">名称更改</text></svg>
<svg class="i" style="left:850.00px;top:354.00px" width="46" height="14"><text x="0" y="7.00" font-size="7.30" fill="rgb(236, 236, 236)" stroke="rgb(236, 236, 236)" stroke-width="0.5" textLength="42.00" lengthAdjust="spacingAndGlyphs">垂直居中对齐</text></svg>
<svg class="i" style="left:850.00px;top:367.00px" width="46" height="14"><text x="0" y="7.00" font-size="7.30" fill="rgb(240, 240, 240)" stroke="rgb(240, 240, 240)" stroke-width="0.5" textLength="42.00" lengthAdjust="spacingAndGlyphs">水平居中对齐</text></svg>
<svg class="i" style="left:0;top:0" width="1000" height="400" fill="#ddd">
 <rect x="899" y="384" width="8" height="6"/><rect x="901" y="382" width="5" height="3"/>
 <rect x="918" y="383" width="9" height="7" rx="1"/><circle cx="922.5" cy="386.5" r="2" fill="#535353"/>
 <rect x="935" y="383" width="6" height="8" rx="1"/><path d="M934 382H942" stroke="#ddd"/>
</svg>
<!-- layers panel -->
<div class="a" style="left:818px;top:395px;width:141px;height:2px;background:#3c3c3c"></div>
<div class="a" style="left:818px;top:397px;width:141px;height:14px;background:#474747"></div>
<div class="a" style="left:818px;top:398px;width:23px;height:13px;background:#535353"></div>
<svg class="i" style="left:822.00px;top:399.00px" width="20" height="14"><text x="0" y="7.00" font-size="8.00" fill="rgb(236, 236, 236)" stroke="rgb(236, 236, 236)" stroke-width="0.5" textLength="16.00" lengthAdjust="spacingAndGlyphs">图层</text></svg>
<svg class="i" style="left:846.00px;top:399.00px" width="20" height="14"><text x="0" y="7.00" font-size="8.00" fill="rgb(169, 169, 169)" stroke="rgb(169, 169, 169)" stroke-width="0.5" textLength="16.00" lengthAdjust="spacingAndGlyphs">通道</text></svg>
<svg class="i" style="left:870.00px;top:399.00px" width="20" height="14"><text x="0" y="7.00" font-size="8.00" fill="rgb(169, 169, 169)" stroke="rgb(169, 169, 169)" stroke-width="0.5" textLength="16.00" lengthAdjust="spacingAndGlyphs">路径</text></svg>
<div class="a" style="left:950px;top:402px;width:6px;height:5px;border-top:1px solid #aaa;border-bottom:1px solid #aaa"></div>
<div class="a" style="left:950px;top:404px;width:6px;height:1px;background:#aaa"></div>
<div class="a" style="left:820px;top:415px;width:50px;height:12px;background:#474747"></div>
<svg class="i" style="left:822px;top:417px" width="8" height="8"><circle cx="5" cy="3" r="2.3" stroke="#ddd" fill="none"/><path d="M3.5 4.5L1 7" stroke="#ddd" stroke-width="1.3"/></svg>
<svg class="i" style="left:831.00px;top:416.00px" width="20" height="14"><text x="0" y="7.00" font-size="8.00" fill="rgb(236, 236, 236)" stroke="rgb(236, 236, 236)" stroke-width="0.5" textLength="16.00" lengthAdjust="spacingAndGlyphs">类型</text></svg>
<svg class="i" style="left:864px;top:420px" width="5" height="3"><path d="M0.5 0L2.5 2.5L4.5 0" stroke="#aaa" fill="none"/></svg>
<svg class="i" style="left:0;top:0" width="1000" height="440" fill="none" stroke="#ddd" stroke-width="1.1">
 <rect x="877" y="417" width="8" height="8"/><path d="M878 424L881 420L884 424"/>
 <circle cx="896" cy="421" r="4"/><path d="M896 417A4 4 0 0 1 896 425Z" fill="#ddd"/>
 <path d="M906 417H914M910 417V425" stroke-width="1.4"/>
 <rect x="920" y="417" width="7" height="7"/>
 <path d="M935 417V425H940V420L937 417Z"/>
 <circle cx="953" cy="420" r="2.5" fill="#eee" stroke="none"/>
</svg>
<svg class="i" style="left:822.00px;top:432.00px" width="20" height="14"><text x="0" y="7.00" font-size="8.00" fill="rgb(124, 124, 124)" stroke="rgb(124, 124, 124)" stroke-width="0.5" textLength="16.00" lengthAdjust="spacingAndGlyphs">正常</text></svg>
<svg class="i" style="left:880.00px;top:432.00px" width="60" height="14"><text x="0" y="7.00" font-size="8.00" fill="rgb(124, 124, 124)" stroke="rgb(124, 124, 124)" stroke-width="0.5" textLength="56.91" lengthAdjust="spacingAndGlyphs">不透明度: 100%</text></svg>
<div class="a" style="left:818px;top:446px;width:141px;height:1px;background:#484848"></div>
<div class="a" style="left:818px;top:462px;width:141px;height:36px;background:#5c5c5c"></div>
<div class="a" style="left:838px;top:477px;width:18px;height:18px;background:#f4f4f4"></div>
<div class="a" style="left:818px;top:520px;width:141px;height:18px;background:#535353;border-top:1px solid #4a4a4a"></div>
<svg class="i" style="left:0;top:0" width="1000" height="538" fill="none" stroke="#cfcfcf" stroke-width="1.1">
 <path d="M841 528H849M842 526A2 2 0 0 0 842 530M848 526A2 2 0 0 1 848 530"/>
 <path d="M857 532L859 524M861 524L863 532M858 528H863" />
 <rect x="872" y="524" width="8" height="7" fill="#cfcfcf"/><circle cx="876" cy="527.5" r="2" fill="#535353" stroke="none"/>
 <circle cx="892" cy="528" r="4"/><path d="M892 524A4 4 0 0 1 892 532Z" fill="#cfcfcf"/>
 <path d="M903 524H907L908 525H912V532H903Z" fill="#cfcfcf"/>
 <rect x="919" y="525" width="7" height="7"/><path d="M921 523H928V530"/>
 <path d="M934 525H941M935 525V532H940V525"/>
</svg>

<!-- ===== WATERMARK ===== -->


<div class="a" style="left:798px;top:448px;width:167px;height:61px;border:2px solid #4f94d8"></div>
<div class="a" style="left:799px;top:480px;width:32px;height:27px;background:#383a4e;border-radius:50% 50% 20% 20%;opacity:0.5"></div>
<div class="a" style="left:798px;top:474px;width:18px;height:15px;background:#e0d4d4;border-radius:50%;opacity:0.85"></div>
<div class="a" style="left:791px;top:479px;width:9px;height:32px;background:linear-gradient(180deg,#7a3a70,#c02a90 50%,#d83a98);border-radius:4px 2px 0 0;opacity:0.9"></div>
<div class="a" style="left:814px;top:493px;width:14px;height:9px;background:#d06a5a;border-radius:50%"></div>
<svg class="i" style="left:0;top:0" width="1000" height="538">
 <g fill="#e4e4e4" fill-opacity="0.88">
  <ellipse cx="847.5" cy="440" rx="6.2" ry="8.2" transform="rotate(-8 847.5 440)"/>
  <ellipse cx="863.5" cy="441.5" rx="6" ry="8" transform="rotate(10 863.5 441.5)"/>
  <ellipse cx="835" cy="453.5" rx="5.6" ry="7.2" transform="rotate(-15 835 453.5)"/>
  <ellipse cx="875" cy="458" rx="5.6" ry="7.2" transform="rotate(15 875 458)"/>
  <path d="M854 457C845 457 841 466 836 472C831 478 832 488 842 489C848 489 851 487 854 487C858 487 861 489 867 489C877 488 878 478 873 472C868 466 864 457 854 457Z"/>
 </g>
 <g fill="#555">
  <path d="M847 468H850V484H845C842 484 841 482 841 479C841 476 843 474 846 474H847Z M847 477H846C845 477 844 478 844 479C844 480 845 481 846 481H847Z" fill-rule="evenodd"/>
  <path d="M853 474H856V481H859V474H862V484H853Z"/>
 </g>
 <g fill="#e8e8e8" fill-opacity="0.9">
  <path d="M799 465H811C815 465 817.5 468 817.5 472V487H811.5V486C809.5 487 806.5 487.5 803.5 487.5C799.5 487.5 797 485 797 481C797 477 800 474 804 474H811.5V472C811.5 470.5 810.5 470 808.5 470H799Z M811.5 478H804.5C803 478 802.5 479.5 802.5 481C802.5 482.5 803.5 483.5 805 483.5C808 483.5 811.5 482.5 811.5 481Z" fill-rule="evenodd"/>
  <path d="M821 466H827V482Q827 484 829 484V487.5H826Q821 487.5 821 482Z"/>
  <rect x="820.5" y="458" width="6" height="5"/>
 </g>
</svg>
<svg class="i" style="left:0;top:0" width="1000" height="538" fill="none" stroke="#e6e6e6" stroke-width="2.8" stroke-linecap="square" opacity="0.95">
 <path d="M890 459.5L885.5 466H891.5L885.5 473H893"/>
 <path d="M884.5 479L893.5 477.5"/>
 <path d="M897 460.5H908.5L898 468M900.5 463L910 468.5"/>
 <path d="M897.5 471H909.5M903.5 471V479M896.5 479.5H910.5"/>
 <path d="M915.5 460.5H923V475.5Q923 479.5 919.5 479.5M917.5 460.5V469.5H923.5M914.5 475.5H920"/>
 <path d="M934 459.5L926.5 466M934 459.5L941.5 466M928.5 468.5H939.5M929.5 472L931 477M935 472V477M940.5 472L939 477M926.5 479.5H941.5"/>
</svg>
<svg class="i" style="left:0;top:0" width="1000" height="538"><path d="M883 484.5H942" stroke="#dcdcdc" stroke-width="2.6" stroke-dasharray="4 1 3 1 5 1 3 2" opacity="0.8"/></svg>
<div class="t" style="left:794px;top:494px;font-size:21px;line-height:24px;color:#f2f4ff;letter-spacing:0.2px;-webkit-text-stroke:0">gyan.baidu.com</div>
</div></body></html>
